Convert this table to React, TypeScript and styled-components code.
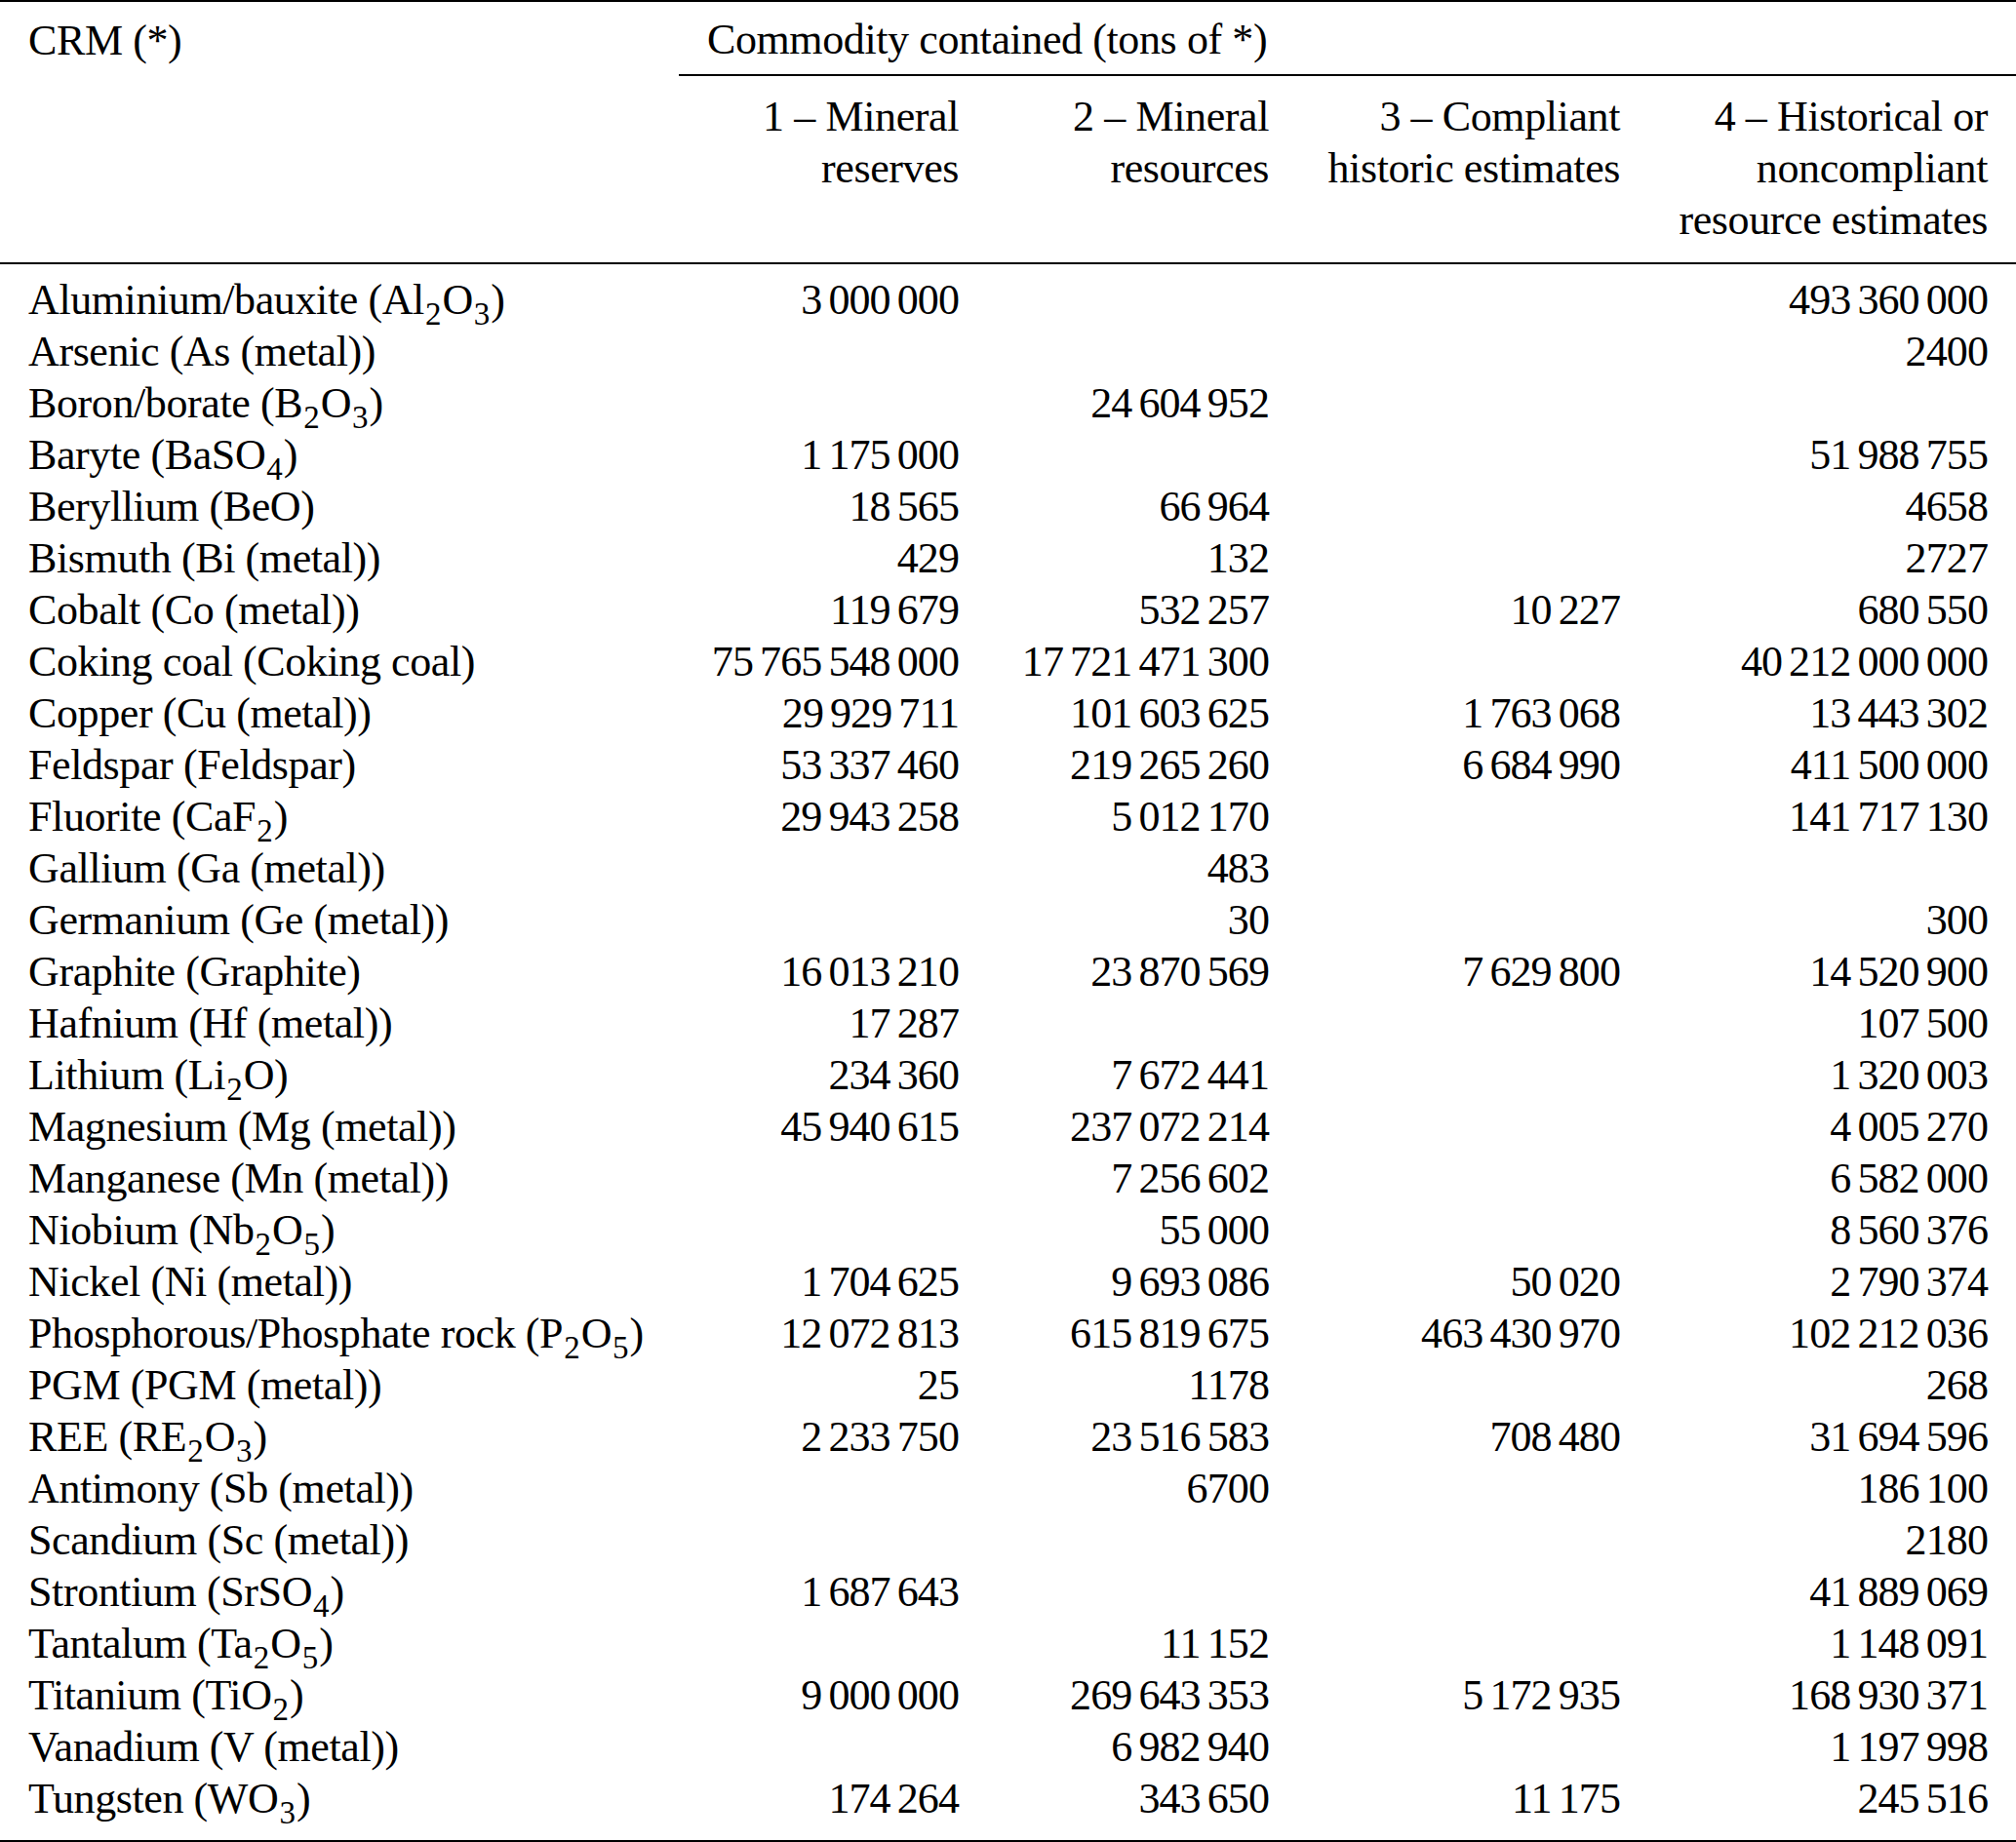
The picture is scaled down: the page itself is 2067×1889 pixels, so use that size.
import React from "react";
import styled, { createGlobalStyle } from "styled-components";

const GlobalStyle = createGlobalStyle`
  html, body { margin: 0; padding: 0; background: #fff; }
  body {
    font-family: "Liberation Serif", "Times New Roman", serif;
    color: #000;
  }
`;

const Table = styled.table`
  width: 2067px;
  table-layout: fixed;
  border-collapse: collapse;
  font-size: 44px;
  line-height: 53px;
  border-top: 2px solid #000;
  border-bottom: 2px solid #000;
`;

const Col = styled.col<{ $w: number }>`
  width: ${(p) => p.$w}px;
`;

const TopHead = styled.th<{ $rule?: boolean }>`
  font-weight: normal;
  text-align: left;
  padding: 12px 29px 9px;
  letter-spacing: -0.4px;
  white-space: nowrap;
  border-bottom: ${(p) => (p.$rule ? "2px solid #000" : "none")};
`;

const SubHead = styled.th`
  font-weight: normal;
  text-align: right;
  vertical-align: top;
  padding: 15px 29px 17px;
  letter-spacing: -0.4px;
  white-space: nowrap;
  border-bottom: 2px solid #000;
`;

const Row = styled.tr`
  &:first-child td { padding-top: 10px; }
  &:last-child td { padding-bottom: 16px; }
`;

const NameCell = styled.td`
  padding: 0 29px;
  text-align: left;
  white-space: nowrap;
  letter-spacing: -0.4px;
`;

const NumCell = styled.td`
  padding: 0 29px;
  text-align: right;
  white-space: nowrap;
  letter-spacing: -0.9px;
`;

const Gap = styled.span`
  display: inline-block;
  width: 7px;
`;

const Sub = styled.sub`
  font-size: 0.75em;
  line-height: 0;
  vertical-align: -0.32em;
  letter-spacing: 0;
  padding: 0 1px;
`;

type RowData = [string, string, string, string, string];

const rows: RowData[] = [
  ["Aluminium/bauxite (Al{2}O{3})", "3 000 000", "", "", "493 360 000"],
  ["Arsenic (As (metal))", "", "", "", "2400"],
  ["Boron/borate (B{2}O{3})", "", "24 604 952", "", ""],
  ["Baryte (BaSO{4})", "1 175 000", "", "", "51 988 755"],
  ["Beryllium (BeO)", "18 565", "66 964", "", "4658"],
  ["Bismuth (Bi (metal))", "429", "132", "", "2727"],
  ["Cobalt (Co (metal))", "119 679", "532 257", "10 227", "680 550"],
  ["Coking coal (Coking coal)", "75 765 548 000", "17 721 471 300", "", "40 212 000 000"],
  ["Copper (Cu (metal))", "29 929 711", "101 603 625", "1 763 068", "13 443 302"],
  ["Feldspar (Feldspar)", "53 337 460", "219 265 260", "6 684 990", "411 500 000"],
  ["Fluorite (CaF{2})", "29 943 258", "5 012 170", "", "141 717 130"],
  ["Gallium (Ga (metal))", "", "483", "", ""],
  ["Germanium (Ge (metal))", "", "30", "", "300"],
  ["Graphite (Graphite)", "16 013 210", "23 870 569", "7 629 800", "14 520 900"],
  ["Hafnium (Hf (metal))", "17 287", "", "", "107 500"],
  ["Lithium (Li{2}O)", "234 360", "7 672 441", "", "1 320 003"],
  ["Magnesium (Mg (metal))", "45 940 615", "237 072 214", "", "4 005 270"],
  ["Manganese (Mn (metal))", "", "7 256 602", "", "6 582 000"],
  ["Niobium (Nb{2}O{5})", "", "55 000", "", "8 560 376"],
  ["Nickel (Ni (metal))", "1 704 625", "9 693 086", "50 020", "2 790 374"],
  ["Phosphorous/Phosphate rock (P{2}O{5})", "12 072 813", "615 819 675", "463 430 970", "102 212 036"],
  ["PGM (PGM (metal))", "25", "1178", "", "268"],
  ["REE (RE{2}O{3})", "2 233 750", "23 516 583", "708 480", "31 694 596"],
  ["Antimony (Sb (metal))", "", "6700", "", "186 100"],
  ["Scandium (Sc (metal))", "", "", "", "2180"],
  ["Strontium (SrSO{4})", "1 687 643", "", "", "41 889 069"],
  ["Tantalum (Ta{2}O{5})", "", "11 152", "", "1 148 091"],
  ["Titanium (TiO{2})", "9 000 000", "269 643 353", "5 172 935", "168 930 371"],
  ["Vanadium (V (metal))", "", "6 982 940", "", "1 197 998"],
  ["Tungsten (WO{3})", "174 264", "343 650", "11 175", "245 516"],
];

function Formula({ text }: { text: string }) {
  const parts = text.split(/(\{\d+\})/);
  return (
    <>
      {parts.map((p, i) =>
        /^\{\d+\}$/.test(p) ? <Sub key={i}>{p.slice(1, -1)}</Sub> : <React.Fragment key={i}>{p}</React.Fragment>
      )}
    </>
  );
}

function Num({ value }: { value: string }) {
  if (!value) return null;
  const groups = value.split(" ");
  return (
    <>
      {groups.map((g, i) => (
        <React.Fragment key={i}>
          {i > 0 && <Gap />}
          {g}
        </React.Fragment>
      ))}
    </>
  );
}

export default function App() {
  return (
    <>
      <GlobalStyle />
      <Table>
        <colgroup>
          <Col $w={696} />
          <Col $w={316} />
          <Col $w={318} />
          <Col $w={360} />
          <Col $w={377} />
        </colgroup>
        <thead>
          <tr>
            <TopHead>CRM (*)</TopHead>
            <TopHead colSpan={4} $rule>
              Commodity contained (tons of *)
            </TopHead>
          </tr>
          <tr>
            <SubHead />
            <SubHead>
              1 – Mineral
              <br />
              reserves
            </SubHead>
            <SubHead>
              2 – Mineral
              <br />
              resources
            </SubHead>
            <SubHead>
              3 – Compliant
              <br />
              historic estimates
            </SubHead>
            <SubHead>
              4 – Historical or
              <br />
              noncompliant
              <br />
              resource estimates
            </SubHead>
          </tr>
        </thead>
        <tbody>
          {rows.map((r) => (
            <Row key={r[0]}>
              <NameCell>
                <Formula text={r[0]} />
              </NameCell>
              <NumCell>
                <Num value={r[1]} />
              </NumCell>
              <NumCell>
                <Num value={r[2]} />
              </NumCell>
              <NumCell>
                <Num value={r[3]} />
              </NumCell>
              <NumCell>
                <Num value={r[4]} />
              </NumCell>
            </Row>
          ))}
        </tbody>
      </Table>
    </>
  );
}
